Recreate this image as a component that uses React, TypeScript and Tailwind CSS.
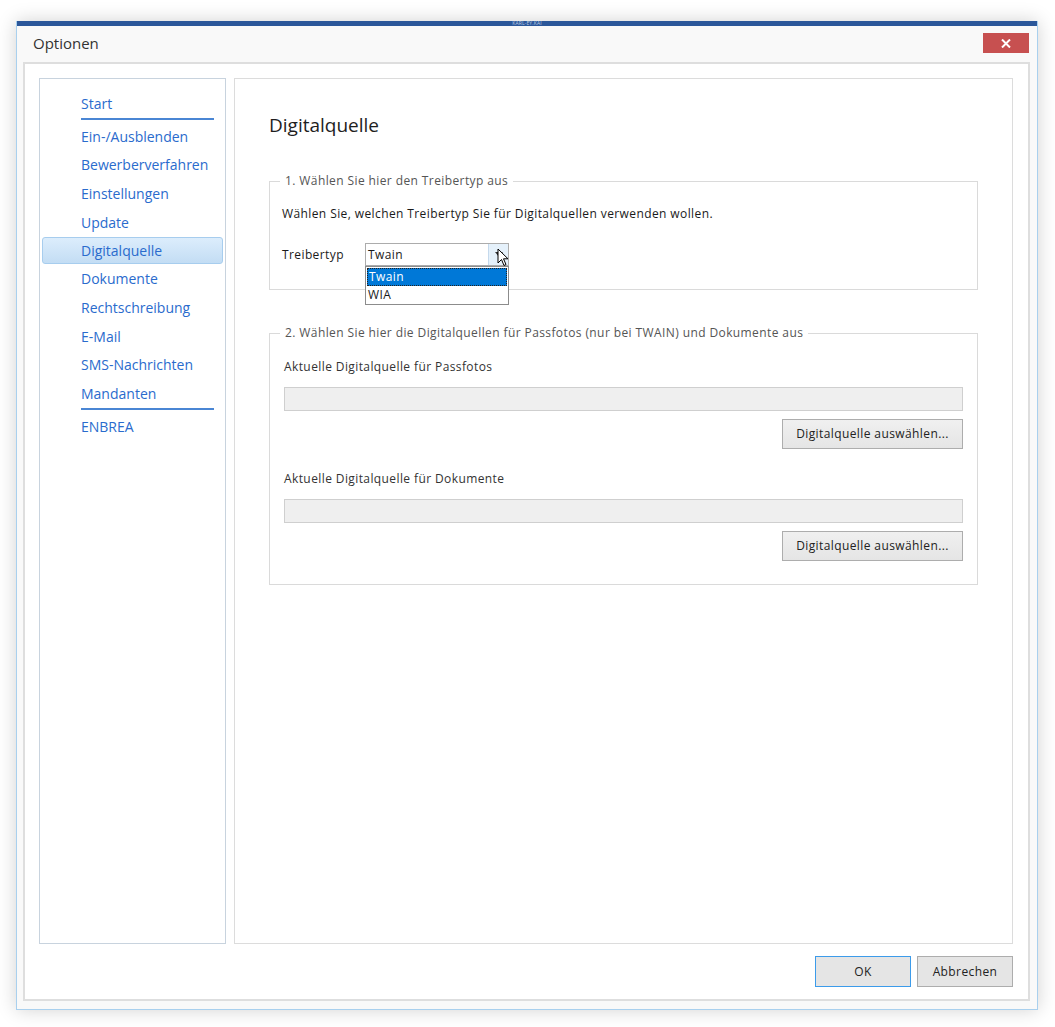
import React from "react";

const navItems = [
  "Start",
  "Ein-/Ausblenden",
  "Bewerberverfahren",
  "Einstellungen",
  "Update",
  "Digitalquelle",
  "Dokumente",
  "Rechtschreibung",
  "E-Mail",
  "SMS-Nachrichten",
  "Mandanten",
  "ENBREA",
];

const font = { fontFamily: '"Open Sans", "Noto Sans", sans-serif' };

function SourcePicker({ label }: { label: string }) {
  return (
    <div className="flex flex-col">
      <div className="text-[12px] leading-[16px] tracking-[0.4px] text-[#333]">{label}</div>
      <div className="mt-[12px] h-[24px] border border-[#cfcfcf] bg-[#efefef]" />
      <div className="mt-[8px] flex justify-end">
        <button className="h-[30px] w-[181px] border border-[#adadad] bg-gradient-to-b from-[#f0f0f0] to-[#e5e5e5] text-[12px] tracking-[0.4px] text-[#222]">
          Digitalquelle auswählen...
        </button>
      </div>
    </div>
  );
}

export default function App() {
  return (
    <div className="min-h-[1027px] w-[1055px] bg-white pl-[16px] pt-[21px]" style={font}>
      <div className="flex h-[989px] w-[1022px] flex-col border-x border-b border-[#a9d0ee] bg-[#f9f9f9] shadow-[0_0_18px_rgba(0,0,0,0.18)]">
        {/* title strip */}
        <div className="flex h-[5px] items-center justify-center bg-[#2b579a]">
          <span className="text-[5px] leading-[5px] tracking-wide text-[#b9c9e0]">KARL-EY.KAI</span>
        </div>
        <div className="flex h-[36px] items-start justify-between pl-[16px] pr-[8px]">
          <span className="mt-[6px] text-[15px] text-[#333]">Optionen</span>
          <button className="mt-[7px] flex h-[20px] w-[46px] items-center justify-center bg-[#c75050] text-white">
            <svg width="10" height="9" viewBox="0 0 10 9">
              <path d="M1 0.5 L9 8.5 M9 0.5 L1 8.5" stroke="white" strokeWidth="2" />
            </svg>
          </button>
        </div>

        <div className="mb-[8px] ml-[6px] mr-[7px] flex flex-1 flex-col border-2 border-[#dedede] bg-white">
          <div className="flex flex-1 gap-[8px] pl-[14px] pr-[15px] pt-[14px]">
            {/* navigation */}
            <div className="w-[187px] border border-[#c8d3de] pt-[10px]">
              {navItems.map((item) => {
                const active = item === "Digitalquelle";
                return (
                  <div key={item}>
                    <div
                      className={
                        active
                          ? "mx-[2px] mt-[1px] flex h-[27px] items-center rounded-[3px] border border-[#a7cdee] bg-gradient-to-b from-[#dcedfc] to-[#c3ddf4] pl-[38px] text-[14px] text-[#2a6bcd]"
                          : "flex h-[28.7px] items-center pl-[41px] text-[14px] text-[#2a6bcd]"
                      }
                    >
                      {item}
                    </div>
                    {(item === "Start" || item === "Mandanten") && (
                      <div className="mb-[2px] ml-[41px] mr-[11px] h-[2px] bg-[#4a86d4]" />
                    )}
                  </div>
                );
              })}
            </div>

            {/* page content */}
            <div className="flex-1 border border-[#dcdcdc] px-[34px] pt-[30px]">
              <h1 className="text-[19px] leading-[32px] text-[#1e1e1e]">Digitalquelle</h1>

              <fieldset className="mt-[31px] h-[118px] border border-[#dadada] pl-[12px] pr-[14px]">
                <legend className="-ml-[2px] px-[5px] text-[12px] tracking-[0.4px] text-[#555]">1. Wählen Sie hier den Treibertyp aus</legend>
                <div className="mt-[15px] text-[12px] tracking-[0.4px] text-[#1a1a1a]">
                  Wählen Sie, welchen Treibertyp Sie für Digitalquellen verwenden wollen.
                </div>
                <div className="mt-[20px] flex items-center">
                  <span className="w-[83px] text-[12px] tracking-[0.4px] text-[#1a1a1a]">Treibertyp</span>
                  <div className="relative">
                    <div className="flex h-[23px] w-[144px] border border-[#acacac] bg-white">
                      <span className="flex-1 pl-[2px] text-[12px] leading-[21px] tracking-[0.4px] text-[#1a1a1a]">Twain</span>
                      <span className="flex w-[20px] items-center justify-center border-l border-[#c5d9ec] bg-[#e5f1fb]">
                        <svg width="8" height="6" viewBox="0 0 8 6">
                          <path d="M0 0 H8 L4 5 Z" fill="#333" />
                        </svg>
                      </span>
                    </div>
                    {/* cursor */}
                    <svg className="absolute left-[132px] top-[5px]" width="12" height="19" viewBox="0 0 12 19">
                      <path d="M1 1 V15 L4.5 11.5 L7 17.5 L9 16.5 L6.5 10.8 H11 Z" fill="white" stroke="black" strokeWidth="1" />
                    </svg>
                    {/* open list */}
                    <div className="absolute left-0 top-[23px] w-[144px] border border-[#8c8c8c] bg-white text-[12px] tracking-[0.4px]">
                      <div className="mx-[1px] mt-[1px] h-[18px] border border-dotted border-[#222] bg-[#0078d7] pl-[1px] leading-[16px] text-white">Twain</div>
                      <div className="h-[18px] pl-[2px] leading-[18px] text-[#1a1a1a]">WIA</div>
                    </div>
                  </div>
                </div>
              </fieldset>

              <fieldset className="mt-[34px] border border-[#dadada] px-[14px] pb-[23px]">
                <legend className="-ml-[4px] px-[5px] text-[12px] tracking-[0.4px] text-[#555]">
                  2. Wählen Sie hier die Digitalquellen für Passfotos (nur bei TWAIN) und Dokumente aus
                </legend>
                <div className="mt-[17px]">
                  <SourcePicker label="Aktuelle Digitalquelle für Passfotos" />
                </div>
                <div className="mt-[22px]">
                  <SourcePicker label="Aktuelle Digitalquelle für Dokumente" />
                </div>
              </fieldset>
            </div>
          </div>

          {/* dialog buttons */}
          <div className="flex h-[55px] items-center justify-end gap-[6px] pr-[15px]">
            <button className="h-[31px] w-[96px] border border-[#3c9bea] bg-[#e5e5e5] text-[12px] tracking-[0.4px] text-[#222]">OK</button>
            <button className="h-[31px] w-[96px] border border-[#adadad] bg-[#e5e5e5] text-[12px] tracking-[0.4px] text-[#222]">Abbrechen</button>
          </div>
        </div>
      </div>
    </div>
  );
}
